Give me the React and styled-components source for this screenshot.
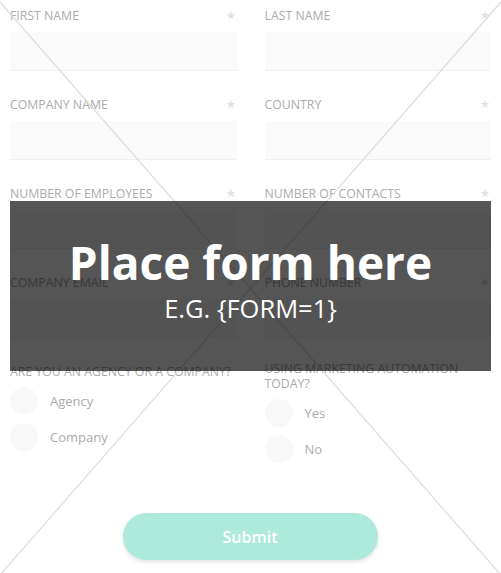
import React from 'react'
import styled, { createGlobalStyle } from 'styled-components'

const GlobalStyle = createGlobalStyle`
    html, body {
        margin: 0;
        padding: 0;
        background: #fff;
        font-family: "Open Sans", "Liberation Sans", sans-serif;
    }
`

const Page = styled.div`
    position: relative;
    width: 501px;
    height: 573px;
    overflow: hidden;
    background: #fff;
`

const Form = styled.form`
    display: flex;
    flex-direction: column;
    padding: 8px 10px 0 10px;
`

const Grid = styled.div`
    display: grid;
    grid-template-columns: 1fr 1fr;
    column-gap: 28px;
    row-gap: 26px;
`

const Field = styled.div`
    display: flex;
    flex-direction: column;
`

const LabelRow = styled.div`
    display: flex;
    justify-content: space-between;
    align-items: flex-start;
    height: 16px;
    margin-bottom: 8px;
`

const Label = styled.label`
    font-size: 12.3px;
    line-height: 16px;
    color: #ababab;
    text-transform: uppercase;
`

const Star = styled.span`
    font-size: 11px;
    line-height: 14px;
    color: #e2e2e2;
    margin-right: 1px;
`

const Input = styled.div`
    height: 38px;
    background: #fafafa;
    border-bottom: 1px solid #efefef;
`

const Group = styled.div`
    display: flex;
    flex-direction: column;
`

const GroupLabel = styled.div`
    font-size: 12.3px;
    line-height: 15px;
    color: #ababab;
    text-transform: uppercase;
    margin-top: ${p => p.$lift || 0}px;
    margin-bottom: 8px;
`

const Options = styled.div`
    display: flex;
    flex-direction: column;
    gap: 8px;
`

const Option = styled.div`
    display: flex;
    align-items: center;
    gap: 12px;
`

const Radio = styled.span`
    width: 28px;
    height: 28px;
    border-radius: 50%;
    background: #f8f8f8;
`

const OptionText = styled.span`
    font-size: 13px;
    color: #acacac;
`

const SubmitRow = styled.div`
    display: flex;
    justify-content: center;
    padding-top: 50px;
    padding-right: 1px;
`

const Submit = styled.button`
    width: 255px;
    height: 47px;
    border: none;
    border-radius: 24px;
    background: #aeeadb;
    color: #fff;
    font-family: "Open Sans", "Liberation Sans", sans-serif;
    font-size: 16px;
    font-weight: 600;
    box-shadow: 0 2px 4px rgba(0, 0, 0, 0.12);
`

const Cross = styled.svg`
    position: absolute;
    inset: 0;
    pointer-events: none;
`

const Overlay = styled.div`
    position: absolute;
    left: 10px;
    top: 201px;
    width: 481px;
    height: 170px;
    background: rgba(0, 0, 0, 0.667);
    display: flex;
    flex-direction: column;
    align-items: center;
    justify-content: center;
    color: #fff;
`

const Title = styled.div`
    font-size: 46px;
    font-weight: 700;
    line-height: 56px;
    margin-top: -14px;
`

const Sub = styled.div`
    font-size: 25.5px;
    line-height: 32px;
    margin-top: 2px;
`

const fields = [
    ['First name', 'Last name'],
    ['Company name', 'Country'],
    ['Number of employees', 'Number of contacts'],
    ['Company email', 'Phone number'],
]

const App = () => {
    return (
        <Page>
            <GlobalStyle />
            <Cross width="501" height="573" viewBox="0 0 501 573">
                <line x1="0" y1="2" x2="501" y2="575" stroke="#dcdcdc" strokeWidth="1.2" />
                <line x1="501" y1="2" x2="0" y2="575" stroke="#dcdcdc" strokeWidth="1.2" />
            </Cross>
            <Form>
                <Grid>
                    {fields.flat().map(name => (
                        <Field key={name}>
                            <LabelRow>
                                <Label>{name}</Label>
                                <Star>★</Star>
                            </LabelRow>
                            <Input />
                        </Field>
                    ))}
                    <Group>
                        <GroupLabel>Are you an agency or a company?</GroupLabel>
                        <Options>
                            <Option><Radio /><OptionText>Agency</OptionText></Option>
                            <Option><Radio /><OptionText>Company</OptionText></Option>
                        </Options>
                    </Group>
                    <Group>
                        <GroupLabel $lift={-3}>Using marketing automation today?</GroupLabel>
                        <Options>
                            <Option><Radio /><OptionText>Yes</OptionText></Option>
                            <Option><Radio /><OptionText>No</OptionText></Option>
                        </Options>
                    </Group>
                </Grid>
                <SubmitRow>
                    <Submit type="button">Submit</Submit>
                </SubmitRow>
            </Form>
            <Overlay>
                <Title>Place form here</Title>
                <Sub>E.G. {'{FORM=1}'}</Sub>
            </Overlay>
        </Page>
    )
}

export default App
